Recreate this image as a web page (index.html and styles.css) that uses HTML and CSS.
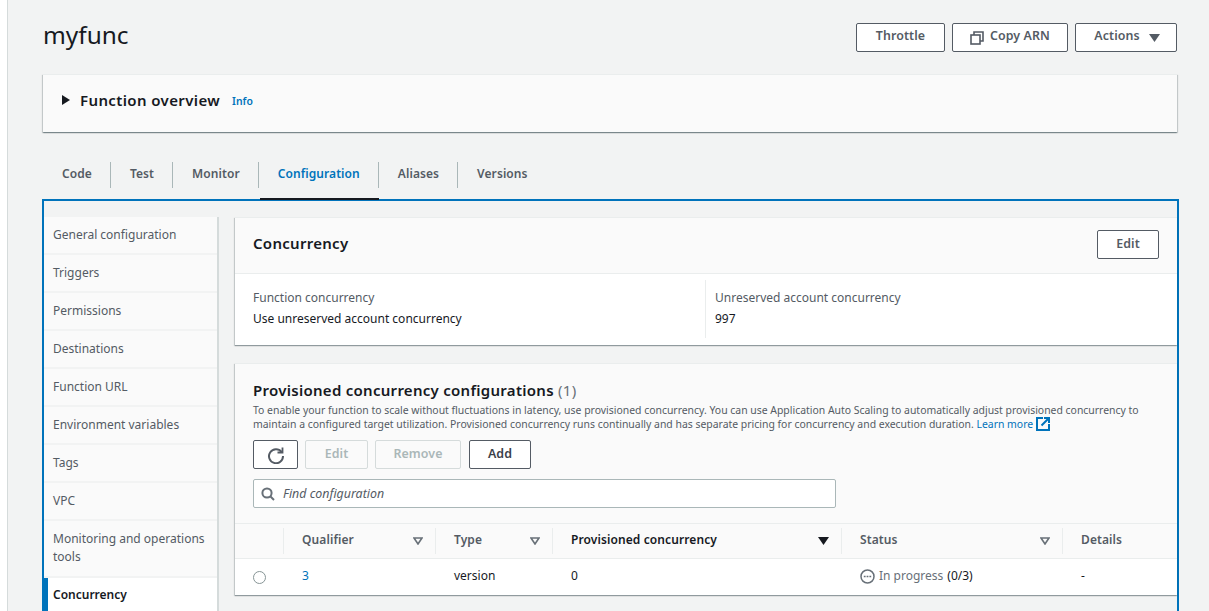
FILE: index.html
```html
<!DOCTYPE html>
<html lang="en">
<head>
<meta charset="utf-8">
<title>myfunc</title>
<link rel="stylesheet" href="styles.css">
</head>
<body>
<div class="rail"></div>
<main class="page">
  <header class="head">
    <h1>myfunc</h1>
    <div class="head-actions">
      <button class="btn w-throttle">Throttle</button>
      <button class="btn w-copy"><svg class="ico" width="14" height="14" viewBox="0 0 14 14" fill="none" stroke="#545b64" stroke-width="1.6"><rect x="1" y="4" width="9" height="9"/><path d="M4 4V1h9v9h-3"/></svg>Copy ARN</button>
      <button class="btn w-actions">Actions<svg class="caret" width="11" height="8" viewBox="0 0 11 8"><path d="M0 0h11L5.5 8z" fill="#545b64"/></svg></button>
    </div>
  </header>
  <section class="overview">
    <svg width="8" height="10" viewBox="0 0 8 10"><path d="M0 0l8 5-8 5z" fill="#16191f"/></svg>
    <h2>Function overview</h2>
    <a class="info">Info</a>
  </section>
  <nav class="tabs">
    <a class="tab t1">Code</a>
    <a class="tab t2">Test</a>
    <a class="tab t3">Monitor</a>
    <a class="tab t4 active">Configuration</a>
    <a class="tab t5">Aliases</a>
    <a class="tab t6">Versions</a>
  </nav>
  <div class="frame">
    <ul class="side">
      <li>General configuration</li>
      <li>Triggers</li>
      <li>Permissions</li>
      <li>Destinations</li>
      <li>Function URL</li>
      <li>Environment variables</li>
      <li>Tags</li>
      <li>VPC</li>
      <li class="two">Monitoring and operations tools</li>
      <li class="current">Concurrency</li>
    </ul>
    <div class="content">
      <section class="card conc">
        <div class="conc-head">
          <h3>Concurrency</h3>
          <button class="btn w-edit">Edit</button>
        </div>
        <div class="conc-body">
          <div class="kv kv-left"><div class="k">Function concurrency</div><div class="v">Use unreserved account concurrency</div></div>
          <div class="kv kv-right"><div class="k">Unreserved account concurrency</div><div class="v">997</div></div>
        </div>
      </section>
      <section class="card prov">
        <div class="prov-top">
          <h3 class="prov-title">Provisioned concurrency configurations <span class="count">(1)</span></h3>
          <p class="desc">To enable your function to scale without fluctuations in latency, use provisioned concurrency. You can use Application Auto Scaling to automatically adjust provisioned concurrency to maintain a configured target utilization. Provisioned concurrency runs continually and has separate pricing for concurrency and execution duration. <a class="link">Learn more</a> <svg class="ext" width="14" height="14" viewBox="0 0 14 14" fill="none" stroke="#0073bb" stroke-width="2"><path d="M7 1H1v12h12V7"/><path d="M5.5 8.5L12 2M8 1h5v5"/></svg></p>
          <div class="tools">
            <button class="btn w-refresh"><svg width="18" height="18" viewBox="0 0 18 18" fill="none" stroke="#545b64" stroke-width="2"><path d="M14.6 6A7 7 0 1 0 16 10"/><path d="M15.5 1.5V6.5H10.5" stroke-width="1.8"/></svg></button>
            <button class="btn off w-e2">Edit</button>
            <button class="btn off w-remove">Remove</button>
            <button class="btn dark w-add">Add</button>
          </div>
          <div class="search"><svg width="14" height="14" viewBox="0 0 14 14" fill="none" stroke="#687078" stroke-width="2"><circle cx="6" cy="6" r="4.6"/><path d="M9.5 9.5L13 13"/></svg><span>Find configuration</span></div>
        </div>
        <div class="grid ghead">
          <div class="c"></div>
          <div class="c hd"><span>Qualifier</span><svg class="sort" width="10" height="8" viewBox="0 0 10 8" fill="none" stroke="#687078" stroke-width="1.6"><path d="M1 1h8L5 7z"/></svg></div>
          <div class="c hd"><span>Type</span><svg class="sort" width="10" height="8" viewBox="0 0 10 8" fill="none" stroke="#687078" stroke-width="1.6"><path d="M1 1h8L5 7z"/></svg></div>
          <div class="c hd sorted"><span>Provisioned concurrency</span><svg class="sort" width="11" height="8" viewBox="0 0 11 8"><path d="M0 0h11L5.5 8z" fill="#16191f"/></svg></div>
          <div class="c hd"><span>Status</span><svg class="sort" width="10" height="8" viewBox="0 0 10 8" fill="none" stroke="#687078" stroke-width="1.6"><path d="M1 1h8L5 7z"/></svg></div>
          <div class="c hd nosep"><span>Details</span></div>
        </div>
        <div class="grid grow">
          <div class="c cr"><span class="radio"></span></div>
          <div class="c"><a class="link">3</a></div>
          <div class="c">version</div>
          <div class="c">0</div>
          <div class="c st"><svg class="st-ico" width="15" height="15" viewBox="0 0 15 15" fill="none"><circle cx="7.5" cy="7.5" r="6.5" stroke="#687078" stroke-width="1.5"/><path d="M3.8 7.5h1.8M6.6 7.5h1.8M9.4 7.5h1.8" stroke="#687078" stroke-width="1.6"/></svg><span class="grey">In progress</span> <span>(0/3)</span></div>
          <div class="c">-</div>
        </div>
      </section>
    </div>
  </div>
</main>
</body>
</html>
```
FILE: styles.css
```css
* { box-sizing: border-box; }
html, body { margin: 0; height: 611px; overflow: hidden; }
body {
  background: #f2f3f3;
  color: #16191f;
  font-family: "Noto Sans", "Open Sans", sans-serif;
  font-size: 12px;
  display: flex;
}
h1, h2, h3, p, ul { margin: 0; padding: 0; }
ul { list-style: none; }
.rail { width: 8px; flex: none; background: #fff; border-right: 1px solid #d5dbdb; }
.page { width: 1137px; margin-left: 34px; flex: none; }

.head { display: flex; justify-content: space-between; align-items: flex-start; height: 74px; padding-top: 23px; }
.head h1 { font-size: 24.4px; font-weight: 400; line-height: 24px; margin-left: 1px; }
.head-actions { display: flex; gap: 7px; margin-right: 2px; }

.btn {
  height: 29px; padding: 0; background: #fff; border: 1px solid #545b64; border-radius: 2px;
  color: #545b64; font: 600 12.4px/1 "Noto Sans", sans-serif; letter-spacing: .1px;
  display: flex; align-items: center; justify-content: center; flex: none;
}
.w-throttle { width: 89px; padding-bottom: 3px; }
.w-copy { width: 116px; padding-bottom: 3px; }
.w-actions { width: 102px; padding-bottom: 3px; padding-left: 2px; }
.ico { margin-right: 6px; margin-top: 3px; }
.caret { margin-left: 9px; margin-top: 3px; }
.w-edit { width: 62px; height: 29px; }
.w-refresh { width: 45px; height: 29px; }
.w-e2 { width: 63px; }
.w-remove { width: 86px; }
.w-add { width: 62px; }
.btn.off { color: #aab7b8; border-color: #d5dbdb; background: #fafafa; margin: 0; }
.btn.dark { color: #3a4149; }

.overview {
  height: 58px; width: 1134px; margin-left: 1px; background: #fafafa;
  box-shadow: 0 1px 1px 0 rgba(0,28,36,.3), 1px 1px 1px 0 rgba(0,28,36,.15), -1px 1px 1px 0 rgba(0,28,36,.15);
  border-top: 1px solid #eaeded; display: flex; align-items: center; padding: 0 0 8px 19px;
}
.overview h2 { font-size: 15px; font-weight: 600; margin-left: 10px; letter-spacing: .38px; }
.info { font-size: 10.4px; font-weight: 600; color: #0073bb; margin-left: 12px; margin-top: 2px; }

.tabs { display: flex; height: 67px; padding-top: 30px; align-items: flex-start; position: relative; }
.tab {
  height: 26px; line-height: 24px; color: #545b64; font-weight: 600; font-size: 12px; letter-spacing: .08px;
  border-right: 1px solid #aab7b8; padding: 0 18px 0 19px;
}
.t1 { padding-left: 20px; }
.t6 { border-right: 0; }
.tab.active { color: #0073bb; position: relative; }
.tab.active::after { content: ""; position: absolute; left: 1px; right: -1px; top: 36px; height: 2px; background: #16191f; }

.frame {
  width: 1137px; height: 420px; border: 2px solid #0073bb; border-bottom: 0; padding-top: 16px;
  display: flex; gap: 16px;
}
.side { width: 175px; flex: none; border-right: 2px solid #d5dbdb; }
.side li {
  background: #fafafa; height: 36px; margin-bottom: 2px; padding-left: 9px; color: #545b64; line-height: 36px; font-size: 12px;
}
.side li.two { height: 55px; line-height: 18px; padding-top: 9px; padding-right: 6px; }
.side li.current { background: #fff; color: #16191f; font-weight: 600; border-left: 4px solid #0073bb; padding-left: 5px; height: 40px; line-height: 34px; }

.content { width: 942px; flex: none; }
.card { background: #fff; box-shadow: 0 1px 1px 0 rgba(0,28,36,.3), -1px 1px 1px 0 rgba(0,28,36,.15); }
.conc { height: 128px; margin-bottom: 18px; border-top: 1px solid #eaeded; }
.conc-head {
  height: 56px; background: #fafafa; border-bottom: 1px solid #eaeded;
  display: flex; justify-content: space-between; align-items: center; padding: 0 18px 2px;
}
.conc-head h3 { font-size: 15px; font-weight: 600; letter-spacing: .28px; margin-top: -3px; }
.conc-body { display: flex; padding-top: 6px; }
.kv { height: 58px; padding-top: 7px; line-height: 21px; font-size: 12px; }
.kv-left { width: 471px; padding-left: 18px; border-right: 1px solid #eaeded; }
.kv-right { padding-left: 9px; }
.k { color: #545b64; }

.prov { height: 232px; background: #fff; }
.prov-top { height: 160px; background: #fafafa; padding: 16px 18px 0; border-top: 1px solid #eaeded; }
.prov-title { font-size: 15px; font-weight: 600; line-height: 20px; letter-spacing: .28px; }
.count { color: #687078; font-weight: 400; }
.desc { font-size: 10.43px; line-height: 14px; color: #545b64; margin-top: 3px; width: 905px; }
.link { color: #0073bb; }
.ext { vertical-align: -3px; }
.tools { display: flex; gap: 7px; margin-top: 9px; }
.tools .w-add { margin-left: 1px; }
.search {
  width: 583px; height: 29px; margin-top: 10px; background: #fff; border: 1px solid #aab7b8; border-radius: 2px;
  display: flex; align-items: center; padding-left: 7px; gap: 8px; font-size: 12.4px; font-style: italic; color: #545b64;
}
.grid { display: grid; grid-template-columns: 49px 152px 117px 289px 221px 1fr; }
.ghead { height: 36px; background: #fafafa; border-top: 1px solid #eaeded; border-bottom: 1px solid #eaeded; align-items: center; }
.c { padding-left: 18px; font-size: 12px; }
.ghead .c { height: 26px; position: relative; line-height: 24px; border-right: 1px solid #eaeded; padding-right: 12px; }
.ghead .c.nosep { border-right: 0; }
.hd { display: flex; justify-content: space-between; align-items: center; color: #545b64; font-weight: 600; letter-spacing: .1px; }
.hd span { margin-top: -2px; }
.sorted { color: #16191f; }
.grow { height: 36px; align-items: center; padding-bottom: 4px; }
.cr { padding-left: 18px; }
.radio { display: block; width: 13px; height: 13px; border: 1px solid #879596; border-radius: 50%; margin-top: 4px; }
.st { display: flex; align-items: center; gap: 4px; }
.st-ico { margin-top: 2px; }
.grey { color: #687078; }
```
